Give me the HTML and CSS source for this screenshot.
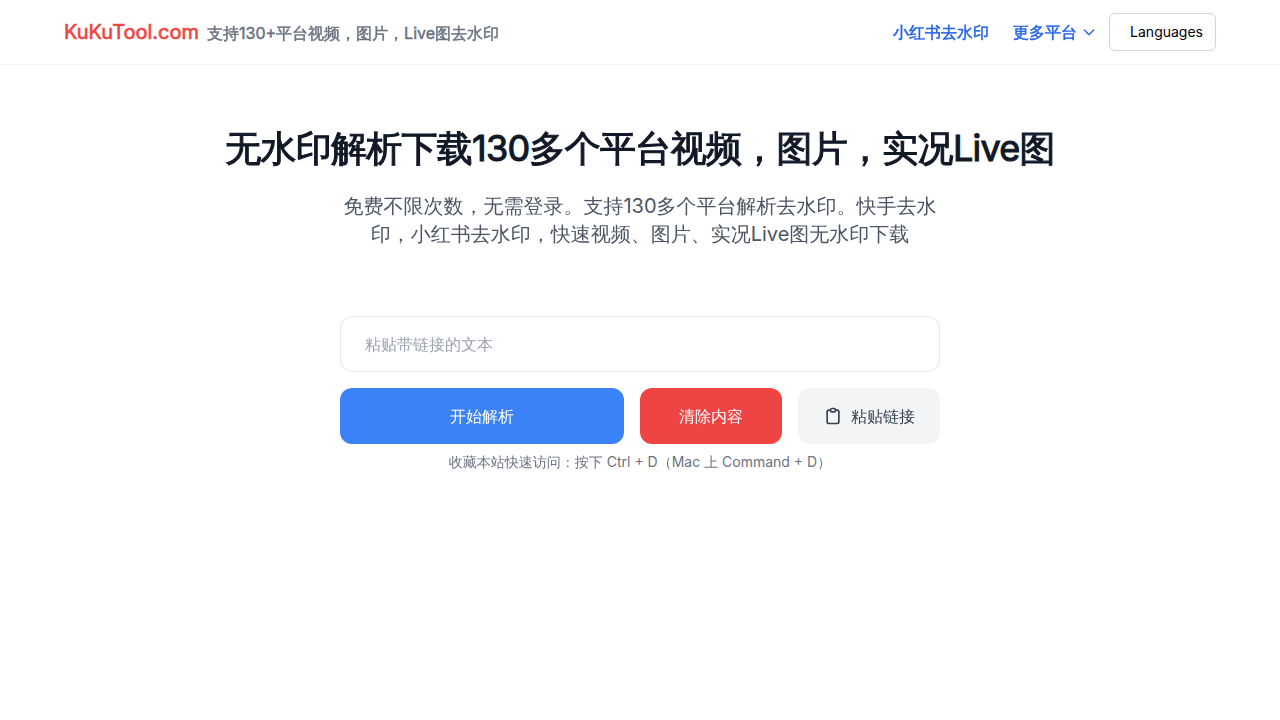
FILE: index.html
```html
<!DOCTYPE html>
<html lang="zh-CN">
<head>
  <meta charset="UTF-8">
  <meta name="viewport" content="width=device-width, initial-scale=1.0">
  <title>KuKuTool.com</title>
  <link rel="stylesheet" href="styles.css">
</head>
<body>
  <!-- Header -->
  <header class="site-header">
    <div class="header-inner">
      <div class="brand">
        <a class="brand-name" href="/">KuKuTool.com</a>
        <span class="brand-desc">支持130+平台视频，图片，Live图去水印</span>
      </div>
      <nav class="site-nav">
        <a class="nav-link" href="/xiaohongshu">小红书去水印</a>
        <button class="nav-more" type="button">
          更多平台
          <svg width="16" height="16" viewBox="0 0 24 24" fill="none" stroke="currentColor" stroke-width="2" stroke-linecap="round" stroke-linejoin="round"><path d="M19 9l-7 7-7-7"/></svg>
        </button>
        <button class="lang-button" type="button">Languages</button>
      </nav>
    </div>
  </header>

  <main class="main">
    <h1 class="title">无水印解析下载130多个平台视频，图片，实况Live图</h1>
    <p class="subtitle">免费不限次数，无需登录。支持130多个平台解析去水印。快手去水印，小红书去水印，快速视频、图片、实况Live图无水印下载</p>

    <!-- Link form -->
    <form class="parse-form">
      <input class="link-input" type="text" placeholder="粘贴带链接的文本" aria-label="粘贴带链接的文本">
      <div class="actions">
        <button class="btn btn-start" type="button">开始解析</button>
        <button class="btn btn-clear" type="button">清除内容</button>
        <button class="btn btn-paste" type="button">
          <svg width="20" height="20" viewBox="0 0 24 24" fill="none" stroke="currentColor" stroke-width="2" stroke-linecap="round" stroke-linejoin="round"><path d="M9 5H7a2 2 0 00-2 2v12a2 2 0 002 2h10a2 2 0 002-2V7a2 2 0 00-2-2h-2M9 5a2 2 0 002 2h2a2 2 0 002-2M9 5a2 2 0 012-2h2a2 2 0 012 2"/></svg>
          粘贴链接
        </button>
      </div>
    </form>
    <p class="hint">收藏本站快速访问：按下 Ctrl + D（Mac 上 Command + D）</p>
  </main>
</body>
</html>
```

FILE: styles.css
```css
* {
  box-sizing: border-box;
}
body {
  margin: 0;
  background: #fff;
  color: #111827;
  font-family: Inter, "WenQuanYi Zen Hei", "WenQuanYi Micro Hei", "Droid Sans Fallback", "Noto Sans CJK SC", sans-serif;
  font-size: 16px;
  line-height: 24px;
}
h1, p {
  margin: 0;
}
a {
  text-decoration: none;
}
button, input {
  font: inherit;
}
button {
  border: none;
  background: none;
  padding: 0;
  cursor: pointer;
}
/* Header */
.site-header {
  border-bottom: 1px solid #f3f4f6;
}
.header-inner {
  display: flex;
  align-items: center;
  justify-content: space-between;
  max-width: 1280px;
  height: 64px;
  margin: 0 auto;
  padding: 0 64px;
}
.brand {
  display: flex;
  align-items: baseline;
  gap: 8px;
}
/* Regular weight thickened with a stroke, keeps the regular widths */
.brand-name, .brand-desc, .nav-link, .nav-more, .title {
  font-weight: 400;
  -webkit-text-stroke: 0.03em currentColor;
}
.brand-name {
  color: #ef4444;
  font-size: 20px;
  line-height: 28px;
}
.brand-desc {
  color: #6b7280;
}
.site-nav {
  display: flex;
  align-items: center;
}
.nav-link, .nav-more {
  color: #2563eb;
}
.nav-more {
  display: flex;
  align-items: center;
  gap: 4px;
  margin: 0 12px 0 24px;
}
.lang-button {
  height: 38px;
  padding: 0 12px 0 20px;
  border: 1px solid #d1d5db;
  border-radius: 6px;
  color: #000;
  font-size: 14px;
}
/* Main */
.main {
  padding: 60px 16px 32px;
  text-align: center;
}
.title {
  font-size: 36px;
  line-height: 46px;
  letter-spacing: -0.02em;
}
.subtitle {
  max-width: 600px;
  margin: 21px auto 0;
  color: #4b5563;
  font-size: 20px;
  line-height: 28px;
}
/* Link form */
.parse-form {
  max-width: 600px;
  margin: 68px auto 0;
}
.link-input {
  display: block;
  width: 100%;
  height: 56px;
  padding: 0 24px;
  border: 1px solid #e5e7eb;
  border-radius: 12px;
  background: #fff;
}
.link-input::placeholder {
  color: #9ca3af;
}
.actions {
  display: grid;
  grid-template-columns: 2fr 1fr 1fr;
  gap: 16px;
  margin-top: 16px;
}
.btn {
  display: flex;
  align-items: center;
  justify-content: center;
  gap: 8px;
  height: 56px;
  border-radius: 12px;
  color: #fff;
}
.btn-start {
  background: #3b82f6;
}
.btn-clear {
  background: #ef4444;
}
.btn-paste {
  background: #f3f4f6;
  color: #374151;
}
.hint {
  margin-top: 8px;
  color: #6b7280;
  font-size: 14px;
  line-height: 20px;
}
```
